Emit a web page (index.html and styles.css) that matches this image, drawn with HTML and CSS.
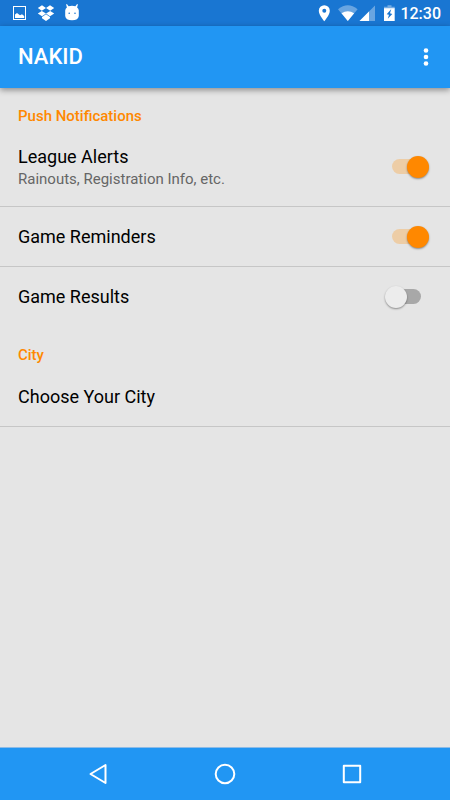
FILE: index.html
```html
<!DOCTYPE html>
<html lang="en">
<head>
<meta charset="utf-8">
<meta name="viewport" content="width=device-width, initial-scale=1">
<title>NAKID</title>
<link rel="stylesheet" href="styles.css">
</head>
<body>
<div class="status-bar">
  <svg class="status-left" width="80" height="26" viewBox="0 0 80 26" fill="#fff" aria-hidden="true">
    <path fill-rule="evenodd" d="M13 6h13v14h-13zM14 7v12h11v-12z"/>
    <path d="M15 18v-3.500l2-1.500 2 1.500 1 .8 2-1 2.200 1.700v2z"/>
    <path d="M42 5.300l4 2.700-4.200 2.700-4-2.700zM50 5.300l4.200 2.700-4 2.700-4.200-2.700zM41.800 10.900l4.200 2.600-4 2.700-4.200-2.700zM50.200 10.900l4 2.600-4.200 2.700-4-2.700zM42 17l4-2.700 4 2.700v1.200l-4 2.700-4-2.700z"/>
    <path fill-rule="evenodd" d="M66.900 4l1.700 2.300q3.400-.9 6.800 0l1.700-2.300.8.400-.8 3.200q1.500 1.200 1.700 2.800v5.600q-.4 4.200-6.800 4.200t-6.800-4.200v-5.600q.2-1.600 1.700-2.800l-.8-3.200zM69.200 12.400a.8.800 0 1 0 0 1.600.8.800 0 0 0 0-1.600zM75 12.400a.8.800 0 1 0 0 1.600.8.800 0 0 0 0-1.600z"/>
  </svg>
  <div class="status-right">
    <svg width="80" height="26" viewBox="317 0 80 26" fill="#fff" aria-hidden="true">
      <path fill-rule="evenodd" d="M324.300 5.200a5.500 5.500 0 0 0-5.500 5.500c0 4.200 5.500 10.500 5.500 10.500s5.500-6.300 5.500-10.500a5.500 5.500 0 0 0-5.500-5.500zm0 3.600a2 2 0 1 1 0 4 2 2 0 0 1 0-4z"/>
      <path opacity=".35" d="M338 9.200q9.800-7.800 19.600 0l-9.800 11.800z"/>
      <path d="M341.500 13.300q6.300-4.200 12.600 0l-6.300 7.700z"/>
      <path opacity=".35" d="M375 5.500v15.500h-15.500z"/>
      <path d="M369 11.500v9.500h-9.500z"/>
      <path opacity=".4" d="M387.500 5.200h4v1.500h3.200v2.300h-10.700v-2.300h3.500z"/>
      <path fill-rule="evenodd" d="M384 8.200h10.700v12.800h-10.700zM391.300 9l-4.600 5.200 2.300.6-1.200 4 4.500-4.900-2.300-.7z"/>
    </svg>
    <time class="clock">12:30</time>
  </div>
</div>
<header class="app-bar">
  <h1>NAKID</h1>
  <button class="overflow" type="button" aria-label="More options">
    <svg width="6" height="20" viewBox="0 0 6 20" fill="#fff" aria-hidden="true"><circle cx="3" cy="3.500" r="2.300"/><circle cx="3" cy="10" r="2.300"/><circle cx="3" cy="16.500" r="2.300"/></svg>
  </button>
</header>
<main class="settings">
  <section>
    <h2>Push Notifications</h2>
    <label class="row row-tall divided">
      <span class="row-text"><span class="row-title">League Alerts</span><span class="row-summary">Rainouts, Registration Info, etc.</span></span>
      <input class="switch" type="checkbox" role="switch" checked>
    </label>
    <label class="row divided">
      <span class="row-title">Game Reminders</span>
      <input class="switch" type="checkbox" role="switch" checked>
    </label>
    <label class="row">
      <span class="row-title">Game Results</span>
      <input class="switch" type="checkbox" role="switch">
    </label>
  </section>
  <section>
    <h2>City</h2>
    <button class="row divided" type="button"><span class="row-title">Choose Your City</span></button>
  </section>
</main>
<nav class="nav-bar" aria-label="System">
  <button type="button" aria-label="Back"><svg width="22" height="22" viewBox="0 0 22 22" aria-hidden="true"><path d="M3.500 11l15-9v18z"/></svg></button>
  <button type="button" aria-label="Home"><svg width="22" height="22" viewBox="0 0 22 22" aria-hidden="true"><circle cx="11" cy="11" r="9.300"/></svg></button>
  <button type="button" aria-label="Overview"><svg width="22" height="22" viewBox="0 0 22 22" aria-hidden="true"><path d="M2.800 2.800h16.400v16.400h-16.400z"/></svg></button>
</nav>
</body>
</html>
```
FILE: styles.css
```css
* {
  box-sizing: border-box;
}

body {
  margin: 0;
  min-height: 100vh;
  display: flex;
  flex-direction: column;
  background: #e5e5e5;
  color: #000;
  font-family: Roboto, "Liberation Sans", sans-serif;
}

h1,
h2 {
  margin: 0;
  font-weight: 500;
}

button {
  border: 0;
  padding: 0;
  background: none;
  color: inherit;
  font: inherit;
  text-align: left;
}

svg {
  display: block;
}

.status-bar {
  display: flex;
  justify-content: space-between;
  height: 26px;
  padding-right: 9px;
  background: #1976d2;
  color: #fff;
}

.status-right {
  display: flex;
  gap: 3px;
}

.clock {
  font-size: 16px;
  font-weight: 500;
  line-height: 28px;
}

.app-bar {
  display: flex;
  align-items: center;
  justify-content: space-between;
  height: 62px;
  padding: 0 12px 0 18px;
  background: #2196f3;
  color: #fff;
  box-shadow: 0 2px 6px rgba(0, 0, 0, 0.4);
}

.app-bar h1 {
  font-size: 22px;
  line-height: 32px;
}

.overflow {
  display: flex;
  justify-content: center;
  width: 24px;
}

.settings {
  flex: 1;
}

h2 {
  padding: 18px 18px 2px;
  color: #ff8800;
  font-size: 15px;
  line-height: 20px;
}

.row {
  display: flex;
  align-items: center;
  justify-content: space-between;
  width: 100%;
  height: 60px;
  padding: 0 21px 0 18px;
}

.row-tall {
  height: 79px;
}

.divided {
  border-bottom: 1px solid #c6c6c6;
}

.row-text {
  display: flex;
  flex-direction: column;
}

.row-title {
  font-size: 18px;
  line-height: 24px;
}

.row-summary {
  color: #666;
  font-size: 15px;
  line-height: 20px;
}

.switch {
  appearance: none;
  position: relative;
  flex: none;
  width: 44px;
  height: 22px;
  margin: 0;
}

.switch::before {
  content: "";
  position: absolute;
  inset: 3px 8px 4px 7px;
  border-radius: 8px;
  background: #a8a8a8;
}

.switch::after {
  content: "";
  position: absolute;
  top: 0;
  left: 0;
  width: 22px;
  height: 22px;
  border-radius: 50%;
  background: #ececec;
  box-shadow: 0 1px 2px rgba(0, 0, 0, 0.4);
}

.switch:checked::before {
  background: #edcda6;
}

.switch:checked::after {
  left: 22px;
  background: #ff8800;
}

.nav-bar {
  display: flex;
  height: 53px;
  padding: 0 35px;
  border-top: 1px solid #8dbbe6;
  background: #2196f3;
}

.nav-bar button {
  flex: 1;
  display: flex;
  align-items: center;
  justify-content: center;
}

.nav-bar svg {
  fill: none;
  stroke: #fff;
  stroke-width: 2;
  stroke-linejoin: round;
}
```
